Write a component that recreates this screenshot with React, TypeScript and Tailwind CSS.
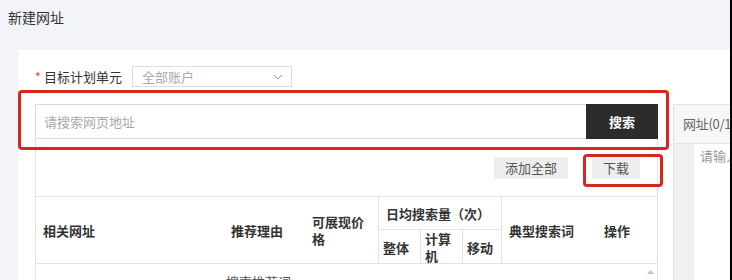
import React from "react";

const font = { fontFamily: '"Noto Sans CJK SC", "Noto Sans", sans-serif' };

function HeaderCell({ children, className = "" }: { children: React.ReactNode; className?: string }) {
  return (
    <div className={`flex shrink-0 items-center text-[13px] font-bold leading-[17px] text-[#333] ${className}`}>
      {children}
    </div>
  );
}

export default function App() {
  return (
    <div className="relative flex h-[280px] w-[732px] overflow-hidden bg-[#f2f4f9]" style={font}>
      <div className="flex w-[730px] shrink-0 flex-col">
        {/* page title */}
        <div className="h-[50px] shrink-0 pl-[8px] pt-[7px] text-[14px] leading-[20px] text-[#333]">新建网址</div>

        {/* white panel */}
        <div className="ml-[18px] min-h-0 flex-1 overflow-hidden bg-white pl-[17px]">
          {/* target unit row */}
          <div className="mt-[16px] flex h-[21px] items-center">
            <span className="w-[9px] text-[12px] leading-[12px] text-[#e33]">*</span>
            <span className="w-[88px] text-[13px] leading-[18px] text-[#333]">目标计划单元</span>
            <div className="flex h-[21px] w-[160px] items-center justify-between border border-[#dcdcdc] pl-[9px] pr-[8px]">
              <span className="text-[13px] leading-[18px] text-[#aaa]">全部账户</span>
              <svg width="10" height="6" viewBox="0 0 10 6" fill="none">
                <polyline points="1,1 5,5 9,1" stroke="#999" strokeWidth="1" />
              </svg>
            </div>
          </div>

          <div className="mt-[17px] flex">
            {/* left column */}
            <div className="w-[623px] shrink-0">
              {/* search */}
              <div className="flex h-[35px]">
                <div className="flex flex-1 items-center border border-r-0 border-[#dcdcdc] pl-[8px] text-[13px] text-[#aaa]">
                  请搜索网页地址
                </div>
                <button className="w-[72px] bg-[#2b2b2b] text-[13px] font-bold text-white">搜索</button>
              </div>

              {/* toolbar */}
              <div className="flex h-[57px] justify-end gap-[24px] border-x border-[#e3e3e3] pr-[17px] pt-[18px]">
                <button className="h-[22px] w-[74px] bg-[#eeeeee] text-[13px] leading-[22px] text-[#555]">添加全部</button>
                <button className="h-[22px] w-[48px] bg-[#eeeeee] text-[13px] leading-[22px] text-[#555]">下载</button>
              </div>

              {/* table header */}
              <div className="flex h-[68px] border border-[#e3e3e3]">
                <HeaderCell className="w-[187px] pl-[7px]">相关网址</HeaderCell>
                <HeaderCell className="w-[81px] pl-[8px]">推荐理由</HeaderCell>
                <HeaderCell className="w-[74px] pl-[8px] pr-[8px]">可展现价格</HeaderCell>
                <div className="flex w-[124px] shrink-0 flex-col border-x border-[#e3e3e3]">
                  <HeaderCell className="h-[32px] pl-[7px]">日均搜索量（次）</HeaderCell>
                  <div className="flex flex-1 border-t border-[#e3e3e3]">
                    <HeaderCell className="w-[42px] border-r border-[#e3e3e3] pl-[4px]">整体</HeaderCell>
                    <HeaderCell className="w-[42px] border-r border-[#e3e3e3] pl-[4px] pr-[8px]">计算机</HeaderCell>
                    <HeaderCell className="w-[38px] pl-[4px]">移动</HeaderCell>
                  </div>
                </div>
                <HeaderCell className="w-[94px] pl-[7px]">典型搜索词</HeaderCell>
                <HeaderCell className="w-[60px] pl-[8px]">操作</HeaderCell>
              </div>

              {/* first row (cut off) */}
              <div className="relative flex h-[30px] border-x border-[#e3e3e3]">
                <div className="ml-[190px] pt-[9px] text-[13px] leading-[17px] text-[#555]">搜索推荐词</div>
                <svg className="absolute right-[3px] top-[6px]" width="7" height="4" viewBox="0 0 7 4">
                  <polygon points="0,4 3.5,0 7,4" fill="#c4c4c4" />
                </svg>
              </div>
            </div>

            {/* right panel */}
            <div className="ml-[15px] min-w-0 flex-1 overflow-hidden border-l border-t border-[#e3e3e3]">
              <div className="flex h-[38px] items-center whitespace-nowrap bg-[#f7f7f7] pl-[9px] text-[13px] tracking-[-0.3px] text-[#666]">
                网址(0/100)
              </div>
              <div className="flex h-[200px] border-t border-[#e3e3e3]">
                <div className="w-[20px] shrink-0 bg-[#f0f0f0]"></div>
                <div className="whitespace-nowrap pl-[6px] pt-[3px] text-[13px] leading-[18px] text-[#999]">请输入网址</div>
              </div>
            </div>
          </div>
        </div>
      </div>

      {/* right window edge */}
      <div className="w-[2px] shrink-0 bg-black"></div>

      {/* red annotation boxes */}
      <div className="absolute left-[18px] top-[90px] h-[60px] w-[651px] rounded-[4px] border-[3px] border-[#d6261e]"></div>
      <div className="absolute left-[583px] top-[154px] h-[33px] w-[80px] rounded-[4px] border-[3px] border-[#d6261e]"></div>
    </div>
  );
}
